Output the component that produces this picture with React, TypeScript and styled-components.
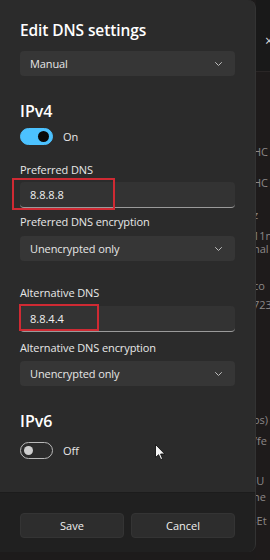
import React from 'react';
import styled, { createGlobalStyle } from 'styled-components';

const GlobalStyle = createGlobalStyle`
  html, body {
    margin: 0;
    padding: 0;
    background: #1d1b1b;
  }
  * {
    box-sizing: border-box;
  }
`;

const Chevron = () => (
  <svg width="9" height="6" viewBox="0 0 9 6" fill="none">
    <path d="M1.5 1.5L4.5 4.5L7.5 1.5" stroke="#bdbdbd" strokeWidth="1" strokeLinecap="round" strokeLinejoin="round" />
  </svg>
);

const Pointer = () => (
  <svg width="11" height="17" viewBox="0 0 11 17">
    <path d="M0.5 0.5V13.5L3.6 10.7L5.7 15.6L7.6 14.8L5.6 10H9.8Z" fill="#f4f4f4" stroke="#111" strokeWidth="0.9" strokeLinejoin="round" />
  </svg>
);

export default function App() {
  return (
    <>
      <GlobalStyle />
      <Page>
        <Dialog>
          <Body>
            <Title>Edit DNS settings</Title>
            <Select $top={10}>
              <span>Manual</span>
              <Chevron />
            </Select>

            <Heading $top={24}>IPv4</Heading>
            <ToggleRow $top={6}>
              <Toggle $on>
                <Knob $on />
              </Toggle>
              <ToggleText>On</ToggleText>
            </ToggleRow>

            <Label $top={17}>Preferred DNS</Label>
            <Input $top={4}>
              8.8.8.8
              <Highlight $left={-8} $width={103} $top={-4} $height={32} />
            </Input>

            <Label $top={6}>Preferred DNS encryption</Label>
            <Select $top={6}>
              <span>Unencrypted only</span>
              <Chevron />
            </Select>

            <Label $top={24}>Alternative DNS</Label>
            <Input $top={5}>
              8.8.4.4
              <Highlight $left={-1} $width={80} $top={-2} $height={27} />
            </Input>

            <Label $top={8}>Alternative DNS encryption</Label>
            <Select $top={5}>
              <span>Unencrypted only</span>
              <Chevron />
            </Select>

            <Heading $top={24}>IPv6</Heading>
            <ToggleRow $top={10}>
              <Toggle>
                <Knob />
              </Toggle>
              <ToggleText>Off</ToggleText>
            </ToggleRow>

            <Cursor>
              <Pointer />
            </Cursor>
          </Body>

          <Footer>
            <Button>Save</Button>
            <Button>Cancel</Button>
          </Footer>
        </Dialog>

        <Behind>
          <TopBar>
            <Close>×</Close>
          </TopBar>
          <Fragment $top={73}>HC</Fragment>
          <Fragment $top={18}>HC</Fragment>
          <Fragment $top={19}>z</Fragment>
          <Fragment $top={8}>11n</Fragment>
          <Fragment $top={0}>nal</Fragment>
          <Fragment $top={24}>co</Fragment>
          <Fragment $top={6}>723</Fragment>
          <Fragment $top={102}>os)</Fragment>
          <Fragment $top={8}>/fe</Fragment>
          <Fragment $top={27}>(U</Fragment>
          <Fragment $top={3}>ne</Fragment>
          <Fragment $top={11}>-Et</Fragment>
        </Behind>
      </Page>
    </>
  );
}

const Page = styled.div`
  width: 270px;
  height: 560px;
  display: flex;
  overflow: hidden;
  font-family: 'Open Sans', 'Noto Sans', sans-serif;
`;

const Dialog = styled.div`
  width: 256px;
  height: 552px;
  flex-shrink: 0;
  display: flex;
  flex-direction: column;
  background: #2b2b2b;
  border-radius: 0 8px 8px 0;
  border-right: 1px solid #333;
  overflow: hidden;
`;

const Body = styled.div`
  position: relative;
  flex: 1;
  padding: 19px 20px 0 20px;
  display: flex;
  flex-direction: column;
`;

const Title = styled.div`
  font-size: 15.5px;
  font-weight: 600;
  line-height: 22px;
  color: #ffffff;
  letter-spacing: -0.1px;
`;

const Heading = styled.div<{ $top: number }>`
  margin-top: ${(p) => p.$top}px;
  font-size: 16px;
  font-weight: 600;
  line-height: 22px;
  color: #ffffff;
`;

const Select = styled.div<{ $top: number }>`
  margin-top: ${(p) => p.$top}px;
  height: 25px;
  padding: 0 12px 0 10px;
  display: flex;
  align-items: center;
  justify-content: space-between;
  background: #363636;
  border-radius: 4px;
  font-size: 11px;
  letter-spacing: -0.1px;
  color: #e6e6e6;
`;

const Input = styled.div<{ $top: number }>`
  position: relative;
  margin-top: ${(p) => p.$top}px;
  height: 26px;
  padding: 0 10px;
  display: flex;
  align-items: center;
  background: #333333;
  border-radius: 4px;
  border-bottom: 1px solid #9a9a9a;
  font-size: 11px;
  color: #f0f0f0;
`;

const Highlight = styled.div<{ $left: number; $width: number; $top: number; $height: number }>`
  position: absolute;
  left: ${(p) => p.$left}px;
  top: ${(p) => p.$top}px;
  width: ${(p) => p.$width}px;
  height: ${(p) => p.$height}px;
  border: 2px solid #cf2a33;
`;

const Label = styled.div<{ $top: number }>`
  margin-top: ${(p) => p.$top}px;
  font-size: 11px;
  line-height: 16px;
  letter-spacing: -0.1px;
  color: #e8e8e8;
`;

const ToggleRow = styled.div<{ $top: number }>`
  margin-top: ${(p) => p.$top}px;
  display: flex;
  align-items: center;
  gap: 10px;
`;

const Toggle = styled.div<{ $on?: boolean }>`
  width: 33px;
  height: 17px;
  border-radius: 9px;
  padding: 0 3px;
  display: flex;
  align-items: center;
  justify-content: ${(p) => (p.$on ? 'flex-end' : 'flex-start')};
  background: ${(p) => (p.$on ? '#4cc2ff' : 'transparent')};
  border: 1px solid ${(p) => (p.$on ? '#4cc2ff' : '#b8b8b8')};
`;

const Knob = styled.div<{ $on?: boolean }>`
  width: ${(p) => (p.$on ? 11 : 9)}px;
  height: ${(p) => (p.$on ? 11 : 9)}px;
  border-radius: 50%;
  background: ${(p) => (p.$on ? '#0a0a0a' : '#cfcfcf')};
`;

const ToggleText = styled.span`
  font-size: 11px;
  color: #e8e8e8;
`;

const Cursor = styled.div`
  position: absolute;
  left: 155px;
  top: 444px;
  line-height: 0;
`;

const Footer = styled.div`
  height: 60px;
  padding: 20px 20px 0 20px;
  display: flex;
  gap: 7px;
  background: #202020;
  border-top: 1px solid #1c1c1c;
`;

const Button = styled.div`
  flex: 1;
  height: 25px;
  display: flex;
  align-items: center;
  justify-content: center;
  background: #2d2d2d;
  border-radius: 4px;
  border: 1px solid #343434;
  font-size: 11px;
  color: #f0f0f0;
`;

const Behind = styled.div`
  flex: 1;
  min-width: 0;
  overflow: hidden;
  display: flex;
  flex-direction: column;
  background: #1e1b1b;
`;

const TopBar = styled.div`
  height: 72px;
  flex-shrink: 0;
  background: #191919;
  border-bottom: 1px solid #2a2626;
  padding-top: 33px;
  padding-left: 9px;
`;

const Close = styled.div`
  font-size: 14px;
  line-height: 16px;
  color: #d8d8d8;
`;

const Fragment = styled.div<{ $top: number }>`
  margin-top: ${(p) => p.$top}px;
  margin-left: -3px;
  font-size: 11px;
  line-height: 13px;
  color: #8c8888;
  white-space: nowrap;
`;
